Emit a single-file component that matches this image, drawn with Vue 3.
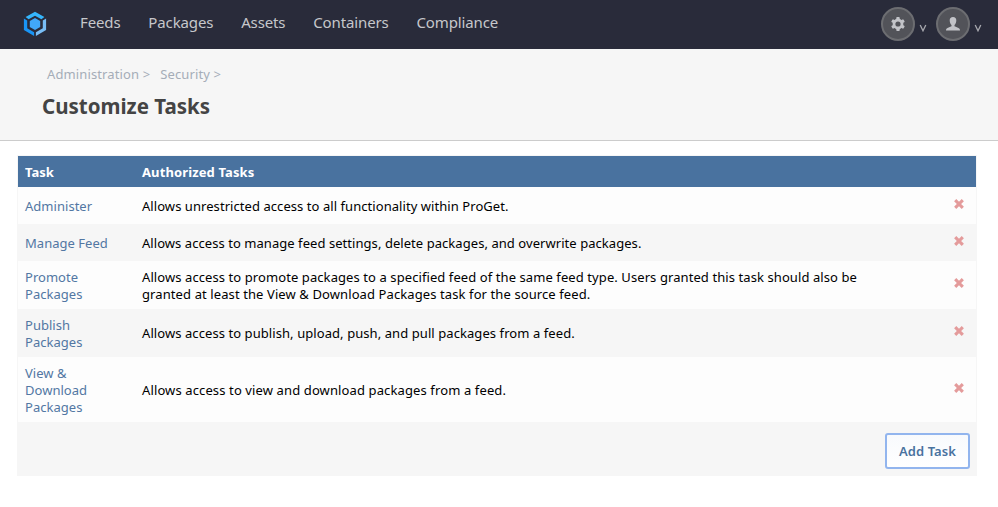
<script setup>
const nav = ['Feeds', 'Packages', 'Assets', 'Containers', 'Compliance']
const tasks = [
  { name: ['Administer'], text: ['Allows unrestricted access to all functionality within ProGet.'], spacing: [0.06] },
  { name: ['Manage Feed'], text: ['Allows access to manage feed settings, delete packages, and overwrite packages.'], spacing: [0.055] },
  {
    name: ['Promote', 'Packages'],
    text: [
      'Allows access to promote packages to a specified feed of the same feed type. Users granted this task should also be',
      'granted at least the View & Download Packages task for the source feed.'
    ],
    spacing: [0.085, 0.1]
  },
  { name: ['Publish', 'Packages'], text: ['Allows access to publish, upload, push, and pull packages from a feed.'], spacing: [0.075] },
  { name: ['View &', 'Download', 'Packages'], text: ['Allows access to view and download packages from a feed.'], spacing: [0.12] }
]
</script>

<template>
  <div class="page">
    <header class="topbar">
      <svg class="logo" width="24" height="26" viewBox="0 0 24 26">
        <path d="M12 .8 21.4 6 18.4 8.200 12 4.700 5.600 8.200 2.600 6Z" fill="#35b5fb" />
        <path d="M.9 7.500 4.200 9.500V17.200L11.100 21.200V25L.9 19.100Z" fill="#1995f5" />
        <path d="M23.100 7.500 19.800 9.500V17.200L12.900 21.200V25L23.100 19.100Z" fill="#78bdf5" />
        <path d="M12 7 17.200 10V16L12 19 6.800 16V10Z" fill="#41a8fa" />
      </svg>
      <nav class="nav">
        <a v-for="item in nav" :key="item">{{ item }}</a>
      </nav>
      <div class="tools">
        <span class="round">
          <svg width="14" height="14" viewBox="0 0 14 14">
            <g fill="#c2c3c8">
              <rect v-for="a in [0, 60, 120]" :key="a" x="5.3" y="0" width="3.4" height="14" rx=".8" :transform="`rotate(${a} 7 7)`" />
              <circle cx="7" cy="7" r="5.4" />
            </g>
            <circle cx="7" cy="7" r="2.6" fill="#525359" />
          </svg>
        </span>
        <svg class="caret" width="8" height="8" viewBox="0 0 8 8"><path d="M1.2 1 4 6.8 6.8 1" /></svg>
        <span class="round">
          <svg width="14" height="14" viewBox="0 0 14 14">
            <path fill="#c2c3c8" d="M7 0C4.800 0 3.700 1.400 3.700 3.300c0 2 .7 3.800 1.800 4.800v1.200L2 10.800C.7 11.400 0 12.100 0 13.400h14c0-1.300-.7-2-2-2.600L8.500 9.300V8.100c1.100-1 1.800-2.800 1.800-4.800C10.300 1.400 9.200 0 7 0Z" />
          </svg>
        </span>
        <svg class="caret" width="8" height="8" viewBox="0 0 8 8"><path d="M1.2 1 4 6.8 6.8 1" /></svg>
      </div>
    </header>

    <section class="heading">
      <div class="crumbs"><span>Administration &gt;</span><span>Security &gt;</span></div>
      <h1>Customize Tasks</h1>
    </section>

    <main class="panel">
      <div class="row head"><b class="col-task">Task</b><b class="col-text">Authorized Tasks</b></div>
      <div v-for="(task, i) in tasks" :key="i" class="row task" :class="{ double: task.name.length === 2 }">
        <div class="name"><a v-for="line in task.name" :key="line">{{ line }}</a></div>
        <div class="text">
          <span v-for="(line, n) in task.text" :key="line" :style="{ letterSpacing: task.spacing[n] + 'px' }">{{ line }}</span>
        </div>
        <svg class="remove" width="12" height="12" viewBox="0 0 12 12"><path d="M2.200 2.200 9.800 9.800M9.800 2.200 2.200 9.800" /></svg>
      </div>
      <div class="foot"><button type="button">Add Task</button></div>
    </main>
  </div>
</template>

<style>
body { margin: 0; background: #fff; }
</style>

<style scoped>
.page { width: 998px; height: 507px; overflow: hidden; font: 13px/17px "Noto Sans", "Open Sans", sans-serif; color: #000; }
.topbar { height: 49px; box-sizing: border-box; background: #292b3a; display: flex; align-items: flex-start; }
.logo { margin: 11px 0 0 23px; flex: none; }
.nav { display: flex; gap: 27.8px; margin: 11px 0 0 33px; font-size: 15px; letter-spacing: -.12px; line-height: 22px; color: #c6c7cb; white-space: nowrap; }
.tools { display: flex; margin: 7px 16px 0 auto; }
.round { width: 34px; height: 34px; box-sizing: border-box; border: 2px solid #6c6d71; border-radius: 50%; background: #525359; display: flex; align-items: center; justify-content: center; }
.caret { margin: 17px 9px 0 4px; fill: none; stroke: #a6a7ad; stroke-width: 1.3; }
.caret:last-child { margin-right: 0; }
.heading { height: 92px; box-sizing: border-box; background: #f6f6f6; border-bottom: 1px solid #ccc; padding: 17px 0 0 42px; }
.crumbs { display: flex; gap: 10px; padding-left: 5px; color: #a5adb8; letter-spacing: .12px; }
h1 { margin: 9px 0 0; font-size: 20.5px; line-height: 28px; color: #444; font-weight: 700; }
.panel { width: 960px; box-sizing: border-box; margin: 14px 0 0 17px; border: 1px solid #f6f6f6; }
.row { display: flex; align-items: center; padding: 8px 7px 6px; }
.head { background: #49729f; color: #fff; }
.col-task { width: 117px; }
.col-text { letter-spacing: .12px; }
.task { min-height: 37px; box-sizing: border-box; background: #fdfdfd; }
.task:nth-child(odd) { background: #f6f6f6; }
.name { width: 117px; flex: none; display: flex; flex-direction: column; color: #5277a3; letter-spacing: .03px; }
.text { flex: 1; display: flex; flex-direction: column; white-space: nowrap; }
.remove { flex: none; margin: 0 4px 5px 0; fill: none; stroke: #e49b9b; stroke-width: 3.1; }
.double .remove { margin-bottom: 7px; }
.double .text { margin-bottom: 1px; }
.foot { height: 54px; box-sizing: border-box; background: #f6f6f6; display: flex; justify-content: flex-end; padding: 11px 6px 0 0; margin-bottom: -1px; }
.double { height: 48px; }
button { width: 85px; height: 36px; box-sizing: border-box; padding: 0; border: 2px solid #92b5ee; border-radius: 3px; background: linear-gradient(#f8fafd, #fff); color: #49729f; font: 600 13px/30px "Noto Sans", sans-serif; letter-spacing: .07px; }
</style>
